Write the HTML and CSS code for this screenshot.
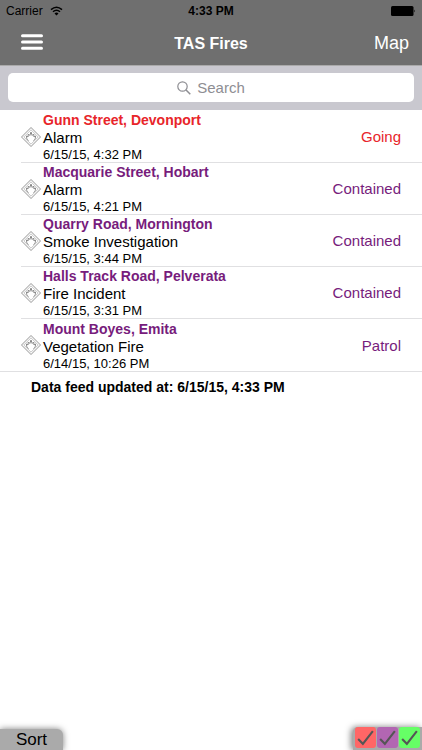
FILE: index.html
```html
<!DOCTYPE html>
<html lang="en">

<head>
  <meta charset="UTF-8">
  <meta name="viewport" content="width=device-width, initial-scale=1.0">
  <title>TAS Fires</title>
  <link rel="stylesheet" href="styles.css">
</head>

<body>
  <svg class="symbols" width="0" height="0" aria-hidden="true">
    <symbol id="fire-sign" viewBox="0 0 20 20">
      <path d="M10 .5 19.5 10 10 19.5 .5 10Z" fill="#fff" stroke="#888" stroke-width="0.9" />
      <path d="M10 2.800 17.200 10 10 17.200 2.800 10Z" fill="none" stroke="#aaa" stroke-width="0.7" />
      <path d="M7.500 13.500C5.600 12.500 5.200 10.500 5.600 9L7 10 7.300 7 8.800 8.500 10 5 11.200 8.500 12.700 7 13 10 14.400 9C14.800 10.500 14.400 12.500 12.500 13.500" fill="none" stroke="#888" stroke-width="1" />
    </symbol>
    <symbol id="tick" viewBox="0 0 20 20">
      <path d="M3 11.500 7.500 16 17 4" fill="none" stroke="#555" stroke-width="2" />
    </symbol>
  </svg>

  <header class="header">
    <div class="status-bar">
      <div class="carrier">
        <span>Carrier</span>
        <svg width="13" height="10" viewBox="0 0 13 10">
          <path d="M1 3.600Q6.500 -1.200 12 3.600M3 5.800Q6.500 2.600 10 5.800" fill="none" stroke="#000" stroke-width="1.500" />
          <path d="M4.500 7.500Q6.500 5.500 8.500 7.500L6.500 9.500Z" />
        </svg>
      </div>
      <span class="clock">4:33 PM</span>
      <svg class="battery" width="25" height="10" viewBox="0 0 25 10">
        <rect x="0" y="0" width="22.500" height="10" rx="1.500" />
        <path d="M23.300 3.500Q24.800 5 23.300 6.500Z" />
      </svg>
    </div>
    <nav class="nav-bar">
      <button type="button" class="menu-button" aria-label="Menu">
        <svg width="22" height="16" viewBox="0 0 22 16">
          <path d="M1.500 1.700H20.500M1.500 8H20.500M1.500 14.200H20.500" stroke="#fff" stroke-width="3" stroke-linecap="round" />
        </svg>
      </button>
      <h1>TAS Fires</h1>
      <a class="map-link" href="#">Map</a>
    </nav>
  </header>

  <form class="search-bar">
    <svg class="search-icon" width="14" height="14" viewBox="0 0 14 14">
      <circle cx="5.500" cy="5.500" r="4.700" fill="none" stroke="#8e8e93" stroke-width="1.200" />
      <path d="M9 9 13.300 13.300" stroke="#8e8e93" stroke-width="1.500" />
    </svg>
    <input type="text" class="search-input" placeholder="Search" aria-label="Search">
  </form>

  <main>
    <ul class="incidents">
      <li class="incident going">
        <svg class="sign"><use href="#fire-sign" /></svg>
        <div class="details">
          <h2>Gunn Street, Devonport</h2>
          <p class="type">Alarm</p>
          <p class="time">6/15/15, 4:32 PM</p>
        </div>
        <span class="status">Going</span>
      </li>
      <li class="incident">
        <svg class="sign"><use href="#fire-sign" /></svg>
        <div class="details">
          <h2>Macquarie Street, Hobart</h2>
          <p class="type">Alarm</p>
          <p class="time">6/15/15, 4:21 PM</p>
        </div>
        <span class="status">Contained</span>
      </li>
      <li class="incident">
        <svg class="sign"><use href="#fire-sign" /></svg>
        <div class="details">
          <h2>Quarry Road, Mornington</h2>
          <p class="type">Smoke Investigation</p>
          <p class="time">6/15/15, 3:44 PM</p>
        </div>
        <span class="status">Contained</span>
      </li>
      <li class="incident">
        <svg class="sign"><use href="#fire-sign" /></svg>
        <div class="details">
          <h2>Halls Track Road, Pelverata</h2>
          <p class="type">Fire Incident</p>
          <p class="time">6/15/15, 3:31 PM</p>
        </div>
        <span class="status">Contained</span>
      </li>
      <li class="incident">
        <svg class="sign"><use href="#fire-sign" /></svg>
        <div class="details">
          <h2>Mount Boyes, Emita</h2>
          <p class="type">Vegetation Fire</p>
          <p class="time">6/14/15, 10:26 PM</p>
        </div>
        <span class="status">Patrol</span>
      </li>
    </ul>
    <p class="updated">Data feed updated at: 6/15/15, 4:33 PM</p>
  </main>

  <footer class="footer">
    <button type="button" class="sort-button">Sort</button>
    <div class="filters">
      <label class="filter">
        <input type="checkbox" class="red" aria-label="Going" checked>
        <svg><use href="#tick" /></svg>
      </label>
      <label class="filter">
        <input type="checkbox" class="purple" aria-label="Contained" checked>
        <svg><use href="#tick" /></svg>
      </label>
      <label class="filter">
        <input type="checkbox" class="green" aria-label="Safe" checked>
        <svg><use href="#tick" /></svg>
      </label>
    </div>
  </footer>
</body>

</html>
```

FILE: styles.css
```css
* {
  box-sizing: border-box;
}

body {
  font-family: "Liberation Sans", Arial, sans-serif;
  background-color: #fff;
  color: #000;
  margin: 0;
  min-height: 100vh;
  display: flex;
  flex-direction: column;
  overflow-x: hidden;
}

h1,
h2,
p,
ul {
  margin: 0;
  padding: 0;
}

button,
input {
  font-family: inherit;
}

svg {
  display: block;
}

.symbols {
  position: absolute;
}

.header {
  background-color: #6f6f6f;
  border-bottom: 1px solid #aaa;
}

.status-bar {
  display: grid;
  grid-template-columns: 1fr auto 1fr;
  align-items: center;
  height: 22px;
  padding: 0 6px;
  font-size: 12px;
}

.carrier {
  display: flex;
  align-items: center;
  gap: 7px;
}

.clock {
  font-weight: bold;
}

.battery {
  justify-self: end;
}

.nav-bar {
  display: grid;
  grid-template-columns: 1fr auto 1fr;
  align-items: center;
  height: 43px;
  padding: 0 13px;
  color: #fff;
}

.menu-button {
  justify-self: start;
  padding: 0 8px 3px;
  border: none;
  background: none;
  cursor: pointer;
}

h1 {
  font-size: 16px;
  font-weight: bold;
}

.map-link {
  justify-self: end;
  color: #fff;
  font-size: 18px;
  text-decoration: none;
}

.search-bar {
  position: relative;
  padding: 7px 8px 8px;
  background-color: #c9c8cf;
}

.search-input {
  display: block;
  width: 100%;
  height: 29px;
  padding: 0 0 0 20px;
  border: none;
  border-radius: 5px;
  background-color: #fff;
  font-size: 15px;
  text-align: center;
}

.search-input::placeholder {
  color: #8e8e93;
}

.search-icon {
  position: absolute;
  top: 15px;
  left: calc(50% - 34px);
}

main {
  flex: 1;
}

.incidents {
  list-style: none;
  padding-top: 1px;
  border-bottom: 1px solid #e0e0e2;
}

.incident {
  display: flex;
  align-items: center;
  gap: 2px;
  height: 52px;
  margin-left: 21px;
  padding-right: 21px;
  border-bottom: 1px solid #e0e0e2;
  color: #771c7c;
}

.incident:last-child {
  border-bottom: none;
}

.incident.going {
  color: #e8252a;
}

.sign {
  flex: none;
  width: 20px;
  height: 20px;
}

.details {
  flex: 1;
}

h2 {
  font-size: 14px;
  line-height: 18px;
}

.type {
  color: #000;
  font-size: 15px;
  line-height: 18px;
}

.time {
  color: #000;
  font-size: 13px;
  line-height: 15px;
}

.status {
  font-size: 15px;
}

.updated {
  padding: 7px 31px;
  font-size: 14px;
  font-weight: bold;
  line-height: 17px;
}

.footer {
  display: flex;
  justify-content: space-between;
  align-items: flex-end;
}

.sort-button {
  width: 63px;
  height: 21px;
  padding: 0;
  border: none;
  border-radius: 0 6px 0 0;
  background-color: #aaa;
  box-shadow: 0 0 6px rgba(0, 0, 0, 0.5);
  color: #000;
  font-size: 17px;
  line-height: 21px;
  cursor: pointer;
}

.filters {
  display: flex;
  gap: 1px;
  padding: 0 2px 2px;
  border-radius: 5px 0 0 0;
  background-color: #aaa;
  box-shadow: -2px 0 6px rgba(0, 0, 0, 0.5);
}

.filter {
  display: grid;
  cursor: pointer;
}

.filter input,
.filter svg {
  grid-area: 1 / 1;
  width: 21px;
  height: 21px;
  margin: 0;
}

.filter svg {
  pointer-events: none;
  visibility: hidden;
}

.filter input:checked + svg {
  visibility: visible;
}

.filter input {
  appearance: none;
  border-radius: 3px;
}

.red {
  background-color: #ff6666;
}

.purple {
  background-color: #b266b2;
}

.green {
  background-color: #66ff66;
}
```
